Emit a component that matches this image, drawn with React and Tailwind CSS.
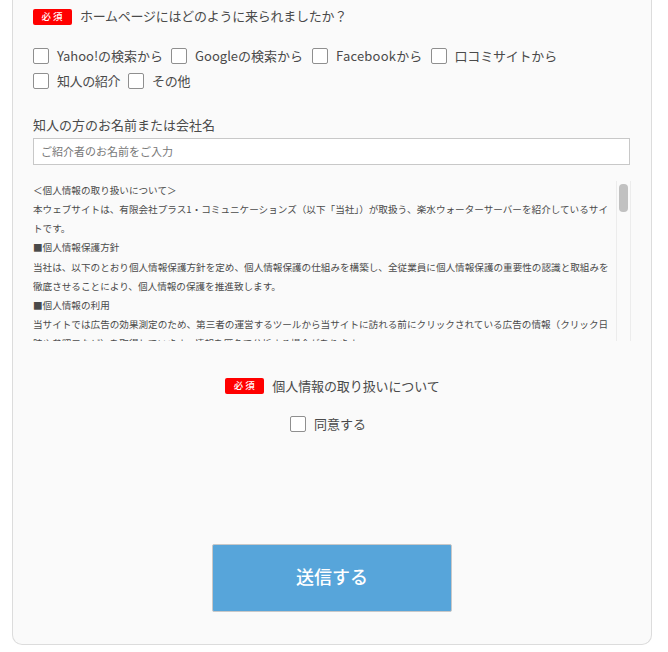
const font = { fontFamily: '"Noto Sans CJK JP", "Noto Sans", sans-serif' };

function Badge() {
  return (
    <span className="flex h-[16px] w-[39px] shrink-0 items-center justify-center rounded-[2px] bg-[#ff0000] pl-[1px] text-[9.5px] font-medium leading-none tracking-[2px] text-white">
      必須
    </span>
  );
}

function Check({ label, gap = "mr-2", track = "" }) {
  return (
    <label className={`flex items-center ${gap}`}>
      <span className="mr-2 h-[16px] w-[16px] shrink-0 rounded-[2px] border border-[#8f8f8f] bg-white" />
      <span className={`text-[13px] leading-[20px] text-[#4a4a4a] ${track}`}>{label}</span>
    </label>
  );
}

const lines = [
  "＜個人情報の取り扱いについて＞",
  "本ウェブサイトは、有限会社プラス1・コミュニケーションズ（以下「当社」）が取扱う、楽水ウォーターサーバーを紹介しているサイ\nトです。",
  "■個人情報保護方針",
  "当社は、以下のとおり個人情報保護方針を定め、個人情報保護の仕組みを構築し、全従業員に個人情報保護の重要性の認識と取組みを徹底させることにより、個人情報の保護を推進致します。",
  "■個人情報の利用",
  "当サイトでは広告の効果測定のため、第三者の運営するツールから当サイトに訪れる前にクリックされている広告の情報（クリック日時や参照元など）を取得しています。情報を匿名で分析する場合があります。",
];

export default function App() {
  return (
    <div className="h-[652px] overflow-hidden bg-white" style={font}>
      <div className="mx-[12px] h-[645px] w-[640px] rounded-b-[10px] border-x border-b border-[#dcdcdc] bg-[#fafafa] px-[20px] pt-[7px]">
        <div className="flex h-[20px] items-center">
          <Badge />
          <span className="ml-[8px] pb-[2px] text-[13px] leading-[20px] tracking-[-0.25px] text-[#4a4a4a]">
            ホームページにはどのように来られましたか？
          </span>
        </div>

        <div className="mt-[19px] flex flex-wrap gap-y-[5px]">
          <Check label="Yahoo!の検索から" />
          <Check label="Googleの検索から" gap="mr-[9px]" />
          <Check label="Facebookから" track="tracking-[0.2px]" />
          <Check label="口コミサイトから" track="tracking-[-0.2px]" />
          <Check label="知人の紹介" track="tracking-[-0.4px]" />
          <Check label="その他" track="tracking-[-0.3px]" />
        </div>

        <p className="mt-[24px] text-[13px] leading-[20px] text-[#4a4a4a]">知人の方のお名前または会社名</p>
        <div className="mt-[3px] flex h-[27px] w-[597px] items-center border border-[#c8c8c8] bg-white px-[7px] text-[11px] text-[#777777]">
          ご紹介者のお名前をご入力
        </div>

        <div className="mt-[16px] flex h-[160px] w-[598px] overflow-hidden">
          <div className="h-[160px] w-[583px] shrink-0 overflow-hidden whitespace-pre-line pr-[6px] text-[9.6px] leading-[19.15px] text-[#4a4a4a]">
            {lines.map((l) => (
              <p key={l}>{l}</p>
            ))}
          </div>
          <div className="h-[160px] w-[15px] shrink-0 border-x border-[#ececec] pl-[2px] pt-[3px]">
            <div className="h-[28px] w-[9px] rounded-[4px] bg-[#c1c1c1]" />
          </div>
        </div>

        <div className="mt-[35px] flex h-[20px] items-center justify-center pl-[1px]">
          <Badge />
          <span className="ml-[8px] text-[13px] leading-[20px] tracking-[-0.1px] text-[#4a4a4a]">個人情報の取り扱いについて</span>
        </div>

        <div className="mt-[18px] flex justify-center pr-[8px]">
          <Check label="同意する" gap="mr-0" />
        </div>

        <div className="mt-[110px] flex justify-center">
          <button className="h-[68px] w-[240px] rounded-[2px] border border-[#c8c8c8] bg-[#57a5da] pb-[3px] text-[18px] font-medium text-white">
            送信する
          </button>
        </div>
      </div>
    </div>
  );
}
